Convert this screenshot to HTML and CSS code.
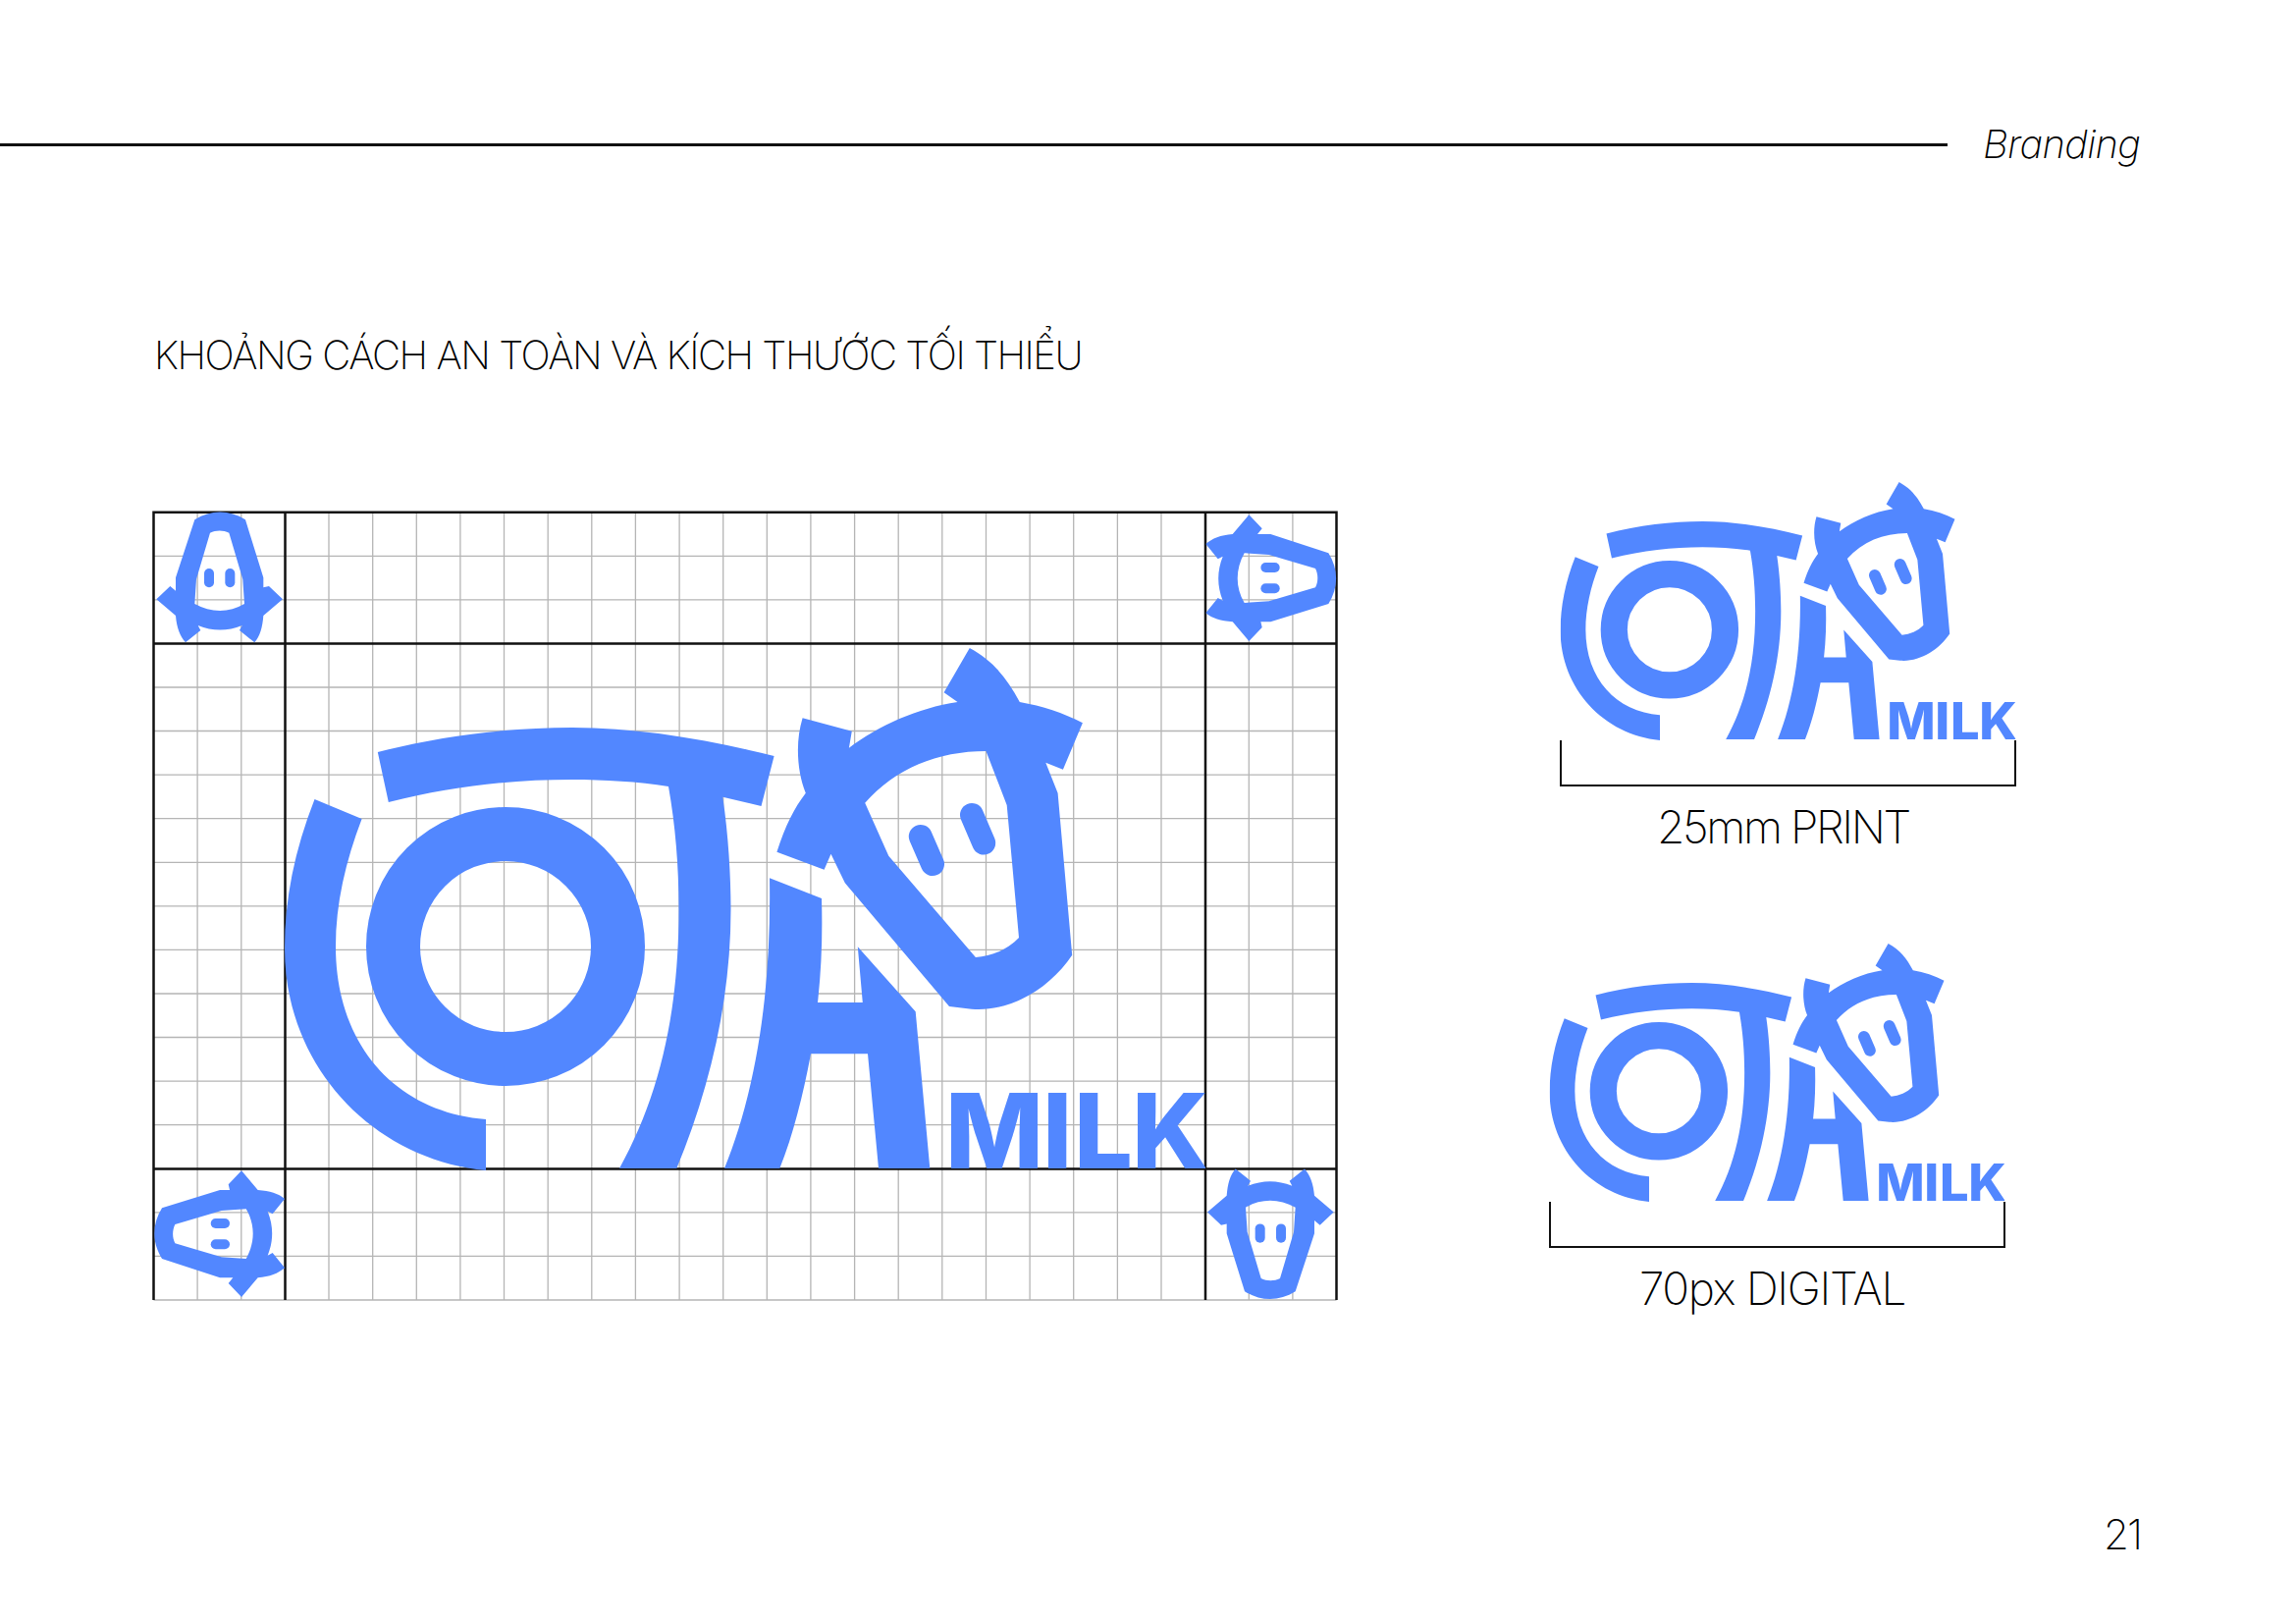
FILE: index.html
```html
<!DOCTYPE html>
<html lang="vi">
<head>
<meta charset="utf-8">
<title>Branding</title>
<link rel="stylesheet" href="styles.css">
</head>
<body>
<svg class="defs" aria-hidden="true">
  <defs>
    <symbol id="logo" viewBox="290 659 938 532">
      <path class="blue" d="M320.5 813L368.6 833C352 876 342 920 342 963C342 1065 405 1132 495 1139L495 1191C380 1180 290 1085 290 965C290 915 300 865 320.5 813Z"/>
      <circle class="ring" cx="515" cy="963" r="114.5"/>
      <path class="blue" d="M384.8 765C450 748 520 740 583 740C650 740 720 752 788.6 769L775.5 820L736.3 810.7C742 850 744.5 890 744.5 925C744.5 1020 722 1110 689.3 1189L631 1189C672 1115 691.5 1030 691.5 925C691.5 880 688 840 681 800C650 795 615 793 583 793C520 793 460 800 395.8 816Z"/>
      <path class="blue" d="M784 893.3L837 914C838 950 837 985 833 1020L878.8 1020L873.8 963.3L932.7 1029.3L947.3 1189L895 1189L884 1072.3L826 1072.3C818 1115 808 1155 794.3 1189L738 1189C770 1110 786 1010 784 893.3Z"/>
      <path class="blue" fill-rule="evenodd" d="M817.6 730.3L867.8 743.7L864.9 760.7C895 738 935 720 975.5 714L961.6 704.3L987.8 659C1012 672 1026 690 1038.8 714C1062 718 1083 725 1102.9 735.3L1082.9 782.7L1065.3 775.7L1077.6 806.7L1092.2 971.7C1070 1005 1030 1030 989.8 1026.7L967 1024L860.8 898.3L846.5 868.7L839.6 884.7L791.4 866.7C800 840 809 822 820.8 806.7C812 785 810 755 817.6 730.3ZM881.2 816.7C912 782 955 764 1004.5 764L1025.7 819L1038 954C1027 966 1010 973 993.9 974L905.3 870.7Z"/>
      <path class="eye" d="M937.8 851L950 879M990 829L1002.2 857.5"/>
      <text class="milk" x="963 1062 1094 1153" y="1189">MILK</text>
    </symbol>
    <g id="head">
      <path class="blue" fill-rule="evenodd" d="M145 55C195 24 250 24 300 55L355 232L355 262L372 258L414 298L355 348C352 385 345 410 328 430L282 393L290 378C245 396 200 396 155 378L163 393L117 430C100 410 90 385 87 348L28 298L70 258L87 272L87 232ZM192 95C210 86 232 86 250 95L292 237L297 312C250 340 195 340 145 312L150 237Z"/>
      <rect class="blue" x="174" y="204" width="30" height="58" rx="15"/>
      <rect class="blue" x="238" y="204" width="30" height="58" rx="15"/>
    </g>
  </defs>
</svg>

<div class="page">
  <header class="topbar">
    <div class="rule"></div>
    <span class="section">Branding</span>
  </header>

  <h1 class="title">KHOẢNG CÁCH AN TOÀN VÀ KÍCH THƯỚC TỐI THIỂU</h1>

  <main class="content">
    <svg class="diagram" viewBox="150 515 1220 815" role="img" aria-label="Logo clear space grid">
      <path class="grid" d="M201.1 521V1323M245.8 521V1323M335 521V1323M379.7 521V1323M424.3 521V1323M468.9 521V1323M513.5 521V1323M558.2 521V1323M602.8 521V1323M647.4 521V1323M692.1 521V1323M736.7 521V1323M781.3 521V1323M825.9 521V1323M870.6 521V1323M915.2 521V1323M959.8 521V1323M1004.5 521V1323M1049.1 521V1323M1093.7 521V1323M1138.4 521V1323M1183 521V1323M1272.3 521V1323M1316.9 521V1323M156.5 565.3H1361.5M156.5 609.8H1361.5M156.5 699H1361.5M156.5 743.5H1361.5M156.5 788.1H1361.5M156.5 832.7H1361.5M156.5 877.3H1361.5M156.5 921.8H1361.5M156.5 966.4H1361.5M156.5 1011H1361.5M156.5 1055.5H1361.5M156.5 1100.1H1361.5M156.5 1144.7H1361.5M156.5 1233.8H1361.5M156.5 1278.4H1361.5M156.5 1323H1361.5"/>
      <path class="frame" d="M156.5 1323V520.7H1361.5V1323M290.5 520.7V1323M1228 520.7V1323M156.5 654.4H1361.5M156.5 1189.6H1361.5"/>
      <use href="#logo" x="290" y="659" width="938" height="532"/>
      <use href="#head" transform="translate(150 510) scale(.3333)"/>
      <use href="#head" transform="translate(1371.7 514) rotate(90) scale(.3333)"/>
      <use href="#head" transform="translate(146.7 1329.3) rotate(-90) scale(.3333)"/>
      <use href="#head" transform="translate(1368 1332.7) rotate(180) scale(.3333)"/>
    </svg>

    <div class="specs">
      <section class="spec spec-print">
        <svg class="spec-logo" viewBox="290 659 938 532" aria-hidden="true"><use href="#logo" x="290" y="659" width="938" height="532"/></svg>
        <div class="bracket"></div>
        <p class="caption">25mm PRINT</p>
      </section>
      <section class="spec spec-digital">
        <svg class="spec-logo" viewBox="290 659 938 532" aria-hidden="true"><use href="#logo" x="290" y="659" width="938" height="532"/></svg>
        <div class="bracket"></div>
        <p class="caption">70px DIGITAL</p>
      </section>
    </div>
  </main>

  <footer class="pagenum">21</footer>
</div>
</body>
</html>
```

FILE: styles.css
```css
html, body {
  margin: 0;
  background: #fff;
}
.defs {
  position: absolute;
  width: 0;
  height: 0;
}
.page {
  position: relative;
  width: 2339px;
  height: 1654px;
  overflow: hidden;
  font-family: Inter, "Noto Sans", sans-serif;
  font-weight: 200;
  color: #000;
}
.topbar {
  display: flex;
  align-items: center;
  gap: 36px;
  height: 60px;
  padding-top: 117px;
}
.rule {
  flex: 0 0 1984px;
  height: 3px;
  background: #111;
}
.section {
  font-size: 40px;
  font-style: italic;
  line-height: 60px;
  letter-spacing: -0.7px;
}
.title {
  margin: 160px 0 0 157px;
  font-size: 40px;
  font-weight: 200;
  line-height: 50px;
  letter-spacing: -1.45px;
  white-space: nowrap;
}
.content {
  display: flex;
  align-items: flex-start;
  margin-top: 104px;
}
.diagram {
  flex: none;
  width: 1220px;
  height: 815px;
  margin: 25px 0 0 150px;
}
.blue { fill: #5287ff; }
.ring {
  fill: none;
  stroke: #5287ff;
  stroke-width: 55;
}
.eye {
  fill: none;
  stroke: #5287ff;
  stroke-width: 24;
  stroke-linecap: round;
}
.milk {
  fill: #5287ff;
  font-family: Inter, sans-serif;
  font-size: 106px;
  font-weight: 800;
}
.grid {
  fill: none;
  stroke: #b5b5b5;
  stroke-width: 1.3;
}
.frame {
  fill: none;
  stroke: #111;
  stroke-width: 2.5;
}
.specs {
  display: flex;
  flex-direction: column;
}
.spec {
  display: flex;
  flex-direction: column;
  width: 465px;
  height: 470px;
}
.spec-print { margin-left: 219px; }
.spec-digital { margin-left: 208px; }
.spec-logo {
  display: block;
  flex: none;
  width: 465px;
  height: 263px;
}
.bracket {
  height: 45px;
  border: solid #111;
  border-width: 0 2px 2.5px;
}
.caption {
  margin: 13px 10px 0 0;
  font-size: 46px;
  line-height: 56px;
  text-align: center;
  white-space: nowrap;
}
.spec-print .caption { letter-spacing: -2.4px; }
.spec-digital .caption { letter-spacing: -1.3px; }
.pagenum {
  position: absolute;
  right: 158px;
  top: 1537px;
  font-size: 42px;
  line-height: 52px;
  letter-spacing: -2px;
}
```
